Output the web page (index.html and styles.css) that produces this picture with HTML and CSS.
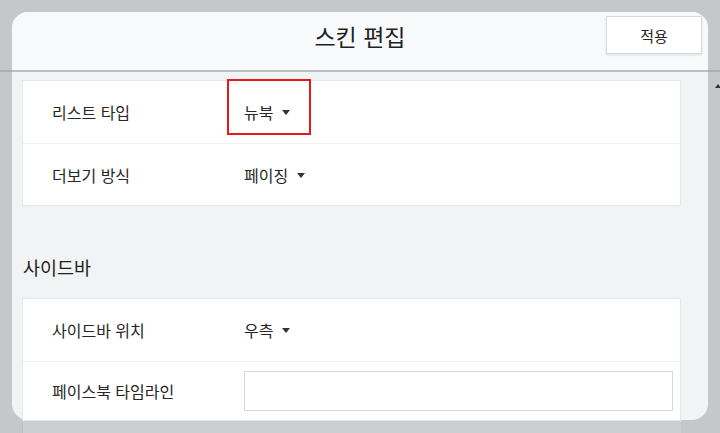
FILE: index.html
```html
<!DOCTYPE html>
<html lang="ko">
<head>
<meta charset="utf-8">
<title>스킨 편집</title>
<link rel="stylesheet" href="styles.css">
</head>
<body>
<div class="backdrop">
  <div class="bd-header"></div>
  <div class="bd-content">
    <div class="bd-card"></div>
    <span class="bd-mark"></span>
  </div>
</div>

<div class="modal">
  <div class="modal-header">
    <span></span>
    <h1 class="modal-title">스킨 편집</h1>
    <button class="apply-btn" type="button">적용</button>
  </div>
  <div class="modal-body">
    <div class="card">
      <div class="row">
        <span class="label">리스트 타입</span>
        <span class="value highlighted">뉴북<i class="caret"></i></span>
      </div>
      <div class="row">
        <span class="label">더보기 방식</span>
        <span class="value">페이징<i class="caret"></i></span>
      </div>
    </div>

    <h2 class="section-title">사이드바</h2>

    <div class="card card-last">
      <div class="row">
        <span class="label">사이드바 위치</span>
        <span class="value">우측<i class="caret"></i></span>
      </div>
      <div class="row row-input">
        <span class="label">페이스북 타임라인</span>
        <input class="text-input" type="text">
      </div>
    </div>
  </div>
</div>
</body>
</html>
```

FILE: styles.css
```css
* { box-sizing: border-box; }

html, body {
  margin: 0;
  padding: 0;
}

body {
  width: 720px;
  height: 433px;
  overflow: hidden;
  background: #c6c7c8;
  font-family: "Noto Sans CJK KR", "Noto Sans", sans-serif;
  color: #262626;
  position: relative;
}

/* page behind the overlay */
.backdrop {
  display: flex;
  flex-direction: column;
  height: 433px;
}

.bd-header {
  height: 72px;
  border-bottom: 2px solid #a9b0b7;
  flex: none;
}

.bd-content {
  flex: 1;
  display: flex;
  padding-left: 22px;
}

.bd-card {
  width: 659px;
  background: #cdcecf;
  border-left: 1px solid #bdbfc2;
}

.bd-mark {
  margin-left: auto;
  margin-top: 12px;
  width: 0;
  height: 0;
  border-left: 3px solid transparent;
  border-right: 3px solid transparent;
  border-bottom: 4px solid #333;
  margin-right: -1px;
}

/* modal */
.modal {
  position: absolute;
  top: 12px;
  left: 12px;
  width: 696px;
  height: 408px;
  background: #f2f3f5;
  border-radius: 16px;
  display: flex;
  flex-direction: column;
}

.modal-header {
  height: 60px;
  flex: none;
  background: #f8f9fb;
  border-radius: 16px 16px 0 0;
  border-bottom: 2px solid #b7bec5;
  display: grid;
  grid-template-columns: 1fr auto 1fr;
  align-items: start;
}

.modal-title {
  margin: 8px 0 0;
  font-size: 23px;
  line-height: 32px;
  font-weight: 400;
  color: #1f1f1f;
}

.apply-btn {
  justify-self: end;
  margin: 4px 6px 0 0;
  width: 96px;
  height: 38px;
  background: #fff;
  border: 1px solid #d8dce1;
  box-shadow: 0 1px 2px rgba(0, 0, 0, 0.12);
  font-family: inherit;
  font-size: 15px;
  color: #262626;
  padding: 0;
}

.modal-body {
  padding: 8px 27px 0 10px;
}

.card {
  background: #fff;
  border: 1px solid #e6e9ec;
}

.card-last {
  border-bottom-color: #e9ebee;
}

.row {
  height: 62px;
  display: grid;
  grid-template-columns: 192px 1fr;
  align-items: center;
  padding: 0 7px 0 29px;
  font-size: 16px;
}

.row + .row {
  border-top: 1px solid #f0f1f3;
}

.row-input {
  height: 59px;
}

.label {
  color: #262626;
}

.value {
  display: inline-flex;
  align-items: center;
  color: #262626;
  position: relative;
  width: max-content;
  line-height: 24px;
}

.caret {
  display: inline-block;
  width: 0;
  height: 0;
  margin-left: 9px;
  margin-top: 1px;
  border-left: 4px solid transparent;
  border-right: 4px solid transparent;
  border-top: 5px solid #333;
}

.highlighted::after {
  content: "";
  position: absolute;
  left: -17px;
  right: -21px;
  top: -21px;
  bottom: -11px;
  border: 2px solid #e8191c;
}

.text-input {
  height: 40px;
  width: 100%;
  border: 1px solid #d3d9df;
  background: #fff;
  font-family: inherit;
  font-size: 15px;
  outline: none;
}

.section-title {
  margin: 47px 0 17px 1px;
  font-size: 18.5px;
  line-height: 28px;
  font-weight: 400;
  color: #1f1f1f;
}
```
